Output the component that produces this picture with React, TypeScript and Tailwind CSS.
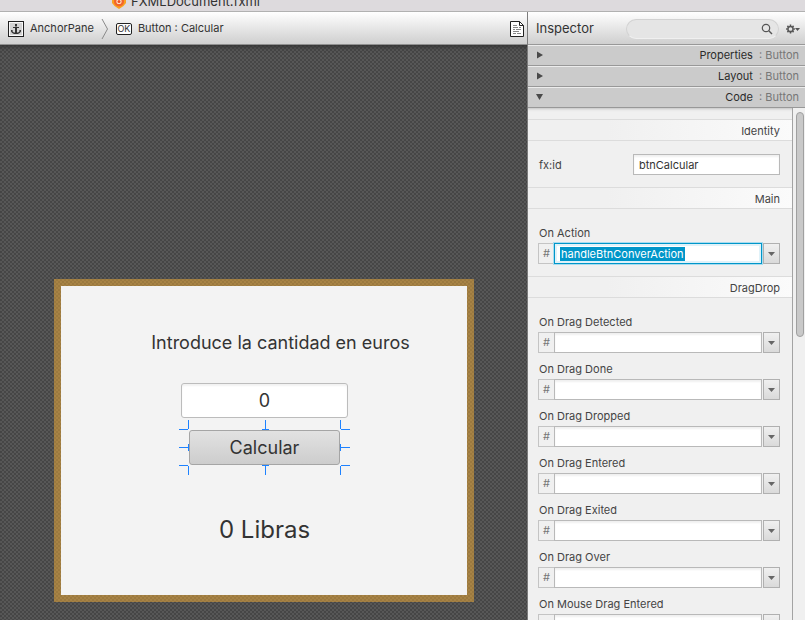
import React from "react";

const dragEvents = [
  "On Drag Detected",
  "On Drag Done",
  "On Drag Dropped",
  "On Drag Entered",
  "On Drag Exited",
  "On Drag Over",
  "On Mouse Drag Entered",
];

function AnchorIcon() {
  return (
    <svg width="16" height="16" viewBox="0 0 16 16" fill="none" aria-hidden="true">
      <rect x="0.5" y="0.5" width="15" height="15" fill="#f8f8f8" stroke="#222" />
      <rect x="2" y="2" width="12" height="12" fill="#d4d4d4" />
      <path d="M7 3H9V5H7ZM7 5.5H9V13H7ZM5 6H11V7H5Z" fill="#333" />
      <path d="M3.5 9.5C4 11.8 6 12.5 8 12.5S12 11.8 12.5 9.5" stroke="#333" strokeWidth="1.2" />
      <path d="M3 11V9H5ZM13 11V9H11Z" fill="#333" />
    </svg>
  );
}

function PageIcon() {
  return (
    <svg width="14" height="16" viewBox="0 0 14 16" fill="none" aria-hidden="true">
      <path d="M0.5 0.5H9.5L13.5 4.5V15.5H0.5Z" fill="#fff" stroke="#222" />
      <path d="M9.5 0.5V4.5H13.5" stroke="#222" />
      <path d="M3 4.5H7M3 6.5H8M9 6.5H11M3 8.5H5M6 8.5H11M3 10.5H9M3 12.5H6M7 12.5H11" stroke="#888" />
    </svg>
  );
}

function FileBadge() {
  return (
    <svg width="16" height="16" viewBox="0 0 16 16" aria-hidden="true">
      <path d="M8 0L15 3V10L12.5 13L8 16L3.5 13L1 10V3Z" fill="#f9a01f" />
      <circle cx="8" cy="8.5" r="5" fill="#f3642a" />
      <circle cx="8" cy="8.5" r="2.6" fill="#fde3c8" />
      <circle cx="8" cy="8.5" r="1.5" fill="#ee4f22" />
    </svg>
  );
}

function GearIcon() {
  return (
    <svg width="14" height="10" viewBox="0 0 14 10" fill="none" aria-hidden="true">
      <circle cx="4.5" cy="5" r="2.6" stroke="#555" strokeWidth="1.5" />
      <path d="M4.5 0.6V2M4.5 8V9.4M0.1 5H1.5M7.5 5H8.9M1.4 1.9L2.4 2.9M6.6 7.1L7.6 8.1M1.4 8.1L2.4 7.1M6.6 2.9L7.6 1.9" stroke="#555" strokeWidth="1.5" />
      <path d="M9 4H14L11.5 7Z" fill="#555" />
    </svg>
  );
}

function Accordion({ title, open }: { title: string; open?: boolean }) {
  return (
    <button
      type="button"
      aria-expanded={!!open}
      className="flex h-[21px] w-full shrink-0 items-center justify-between border-t border-b border-t-[#ececec] border-b-[#989898] bg-[#cbcbcb] pr-[6px] pl-2"
    >
      <svg width="8" height="8" viewBox="0 0 8 8" className="mb-[2px]" aria-hidden="true">
        <path d={open ? "M0 1H7L3.5 7Z" : "M1 0.5L7 4L1 7.5Z"} fill="#4a4a4a" />
      </svg>
      <span className="text-[#777]">
        <span className="text-[#2b2b2b]">{title}</span>&nbsp; : Button
      </span>
    </button>
  );
}

function SectionTitle({ children }: { children: React.ReactNode }) {
  return (
    <h2 className="flex h-[22px] items-center justify-end border-y border-[#dcdcdc] bg-linear-to-r from-[#f0f0f0] from-30% to-[#fbfbfb] pt-[2px] pr-3 text-[#444]">
      {children}
    </h2>
  );
}

function EventField({ label, value, active }: { label: string; value?: string; active?: boolean }) {
  const id = label.replace(/ /g, "-").toLowerCase();
  return (
    <div className="flex flex-col gap-[2px]">
      <label htmlFor={id} className="pl-px leading-4 text-[#444]">
        {label}
      </label>
      <div className="flex h-[21px]">
        <span className="flex w-4 items-center justify-center border border-r-0 border-[#c4c4c4] text-[#777]">#</span>
        {active ? (
          <div className="relative flex min-w-0 flex-1 items-center border border-[#0096c9] bg-white pl-[5px] shadow-[0_0_0_1px_#a9dcef,inset_0_0_0_2px_#e0f2f9]">
            <input
              id={id}
              defaultValue={value}
              className="field-sizing-content h-[14px] bg-[#0096c9] px-px leading-[14px] text-white outline-none"
            />
          </div>
        ) : (
          <input
            id={id}
            className="min-w-0 flex-1 border border-[#b9b9b9] bg-white px-1 shadow-[inset_0_2px_2px_#f0f0f0] outline-none"
          />
        )}
        <button
          type="button"
          aria-label={"Options for " + label}
          className="ml-px flex w-[17px] items-center justify-center border border-[#b0b0b0] bg-linear-to-b from-[#f0f0f0] to-[#dadada]"
        >
          <svg width="7" height="4" viewBox="0 0 7 4" aria-hidden="true">
            <path d="M0 0H7L3.5 4Z" fill="#666" />
          </svg>
        </button>
      </div>
    </div>
  );
}

function SelectionHandles() {
  return (
    <svg
      width="171"
      height="55"
      viewBox="0 0 171 55"
      fill="none"
      className="pointer-events-none absolute -top-[10px] -left-[10px]"
      shapeRendering="crispEdges"
      aria-hidden="true"
    >
      <path
        d="M0 9.5H9M9.5 0V9M162 9.5H171M161.5 0V9M0 45.5H9M9.5 46V55M162 45.5H171M161.5 46V55M86.5 0V9M83 9.5H90M86.5 46V55M83 45.5H90M0 27.5H9M9.5 24V31M162 27.5H171M161.5 24V31"
        stroke="#1e82ff"
      />
    </svg>
  );
}

export default function App() {
  return (
    <div className="flex h-screen flex-col overflow-hidden bg-[#f0f0f0] font-['Inter','Liberation_Sans',sans-serif] text-[11px] text-[#333]">
      <header className="flex h-3 shrink-0 items-end overflow-hidden border-b border-[#b1b1b1] bg-[#dddadd] pl-[111px]">
        <div className="flex h-5 items-center gap-1 text-[13px] leading-5 text-[#333]">
          <FileBadge />
          <span>FXMLDocument.fxml</span>
        </div>
      </header>

      <div className="flex min-h-0 flex-1">
        <main className="flex min-w-0 flex-1 flex-col">
          <nav
            aria-label="Hierarchy"
            className="flex h-[33px] shrink-0 items-center border-b border-[#8f8f8f] bg-linear-to-b from-white to-[#cfcfcf] pt-px pr-[3px] pl-2"
          >
            <AnchorIcon />
            <span className="ml-[6px]">AnchorPane</span>
            <svg width="8" height="22" viewBox="0 0 8 22" fill="none" className="mx-[7px]" aria-hidden="true">
              <path d="M1 1L6.5 11L1 21" stroke="#8a8a8a" />
            </svg>
            <span className="flex h-3 w-4 items-center justify-center rounded-[2px] border border-[#222] bg-white text-[9px] leading-none">
              OK
            </span>
            <span className="ml-[6px] flex-1">Button : Calcular</span>
            <PageIcon />
          </nav>

          <div className="flex flex-1 justify-center overflow-hidden bg-[repeating-conic-gradient(#464646_0_25%,#575757_0_50%)] bg-size-[4px_4px] pt-[234px] pl-px shadow-[inset_0_6px_5px_-4px_#333]">
            <section className="flex h-[323px] w-[420px] shrink-0 bg-[repeating-conic-gradient(#9b793f_0_25%,#a78345_0_50%)] bg-size-[4px_4px] p-[7px]">
              <div className="flex flex-1 flex-col items-center bg-[#f3f3f3] pl-px">
                <label htmlFor="euros" className="mt-[45px] pl-8 text-[18px] leading-6">
                  Introduce la cantidad en euros
                </label>
                <input
                  id="euros"
                  defaultValue="0"
                  className="mt-7 h-[35px] w-[167px] rounded-[3px] border border-[#bcbcbc] bg-white text-center text-[18px] shadow-[inset_0_2px_2px_#f2f2f2] outline-none"
                />
                <div className="relative mt-3">
                  <button
                    type="button"
                    className="block h-[35px] w-[151px] rounded-[3px] border border-[#a5a5a5] bg-linear-to-b from-[#e2e2e2] to-[#cdcdcd] text-[18px] leading-none"
                  >
                    Calcular
                  </button>
                  <SelectionHandles />
                </div>
                <output htmlFor="euros" className="mt-[49px] text-[24px] leading-8">
                  0 Libras
                </output>
              </div>
            </section>
          </div>
        </main>

        <aside className="flex w-[278px] shrink-0 flex-col border-l border-[#7c7c7c]">
          <div className="flex h-[33px] shrink-0 items-center border-b border-[#989898] bg-linear-to-b from-white to-[#cfcfcf] pt-px pr-[5px] pl-2">
            <h1 className="text-[13px]">Inspector</h1>
            <div className="relative ml-auto">
              <input
                type="search"
                aria-label="Search"
                className="block h-5 w-[153px] rounded-full border border-[#d2d2d2] border-b-[#f0f0f0] bg-[#e5e5e5] pr-7 pl-3 outline-none"
              />
              <svg width="12" height="12" viewBox="0 0 12 12" fill="none" className="absolute top-1 right-[6px]" aria-hidden="true">
                <circle cx="5" cy="5" r="3.7" stroke="#555" strokeWidth="1.2" />
                <path d="M7.8 7.8L11 11" stroke="#555" strokeWidth="1.4" />
              </svg>
            </div>
            <button type="button" aria-label="Settings" className="ml-[7px]">
              <GearIcon />
            </button>
          </div>
          <Accordion title="Properties" />
          <Accordion title="Layout" />
          <Accordion title="Code" open />

          <div className="flex min-h-0 flex-1">
            <div className="min-w-0 flex-1 overflow-hidden pt-[11px] shadow-[inset_0_4px_3px_-3px_#c0c0c0]">
              <SectionTitle>Identity</SectionTitle>
              <div className="flex items-center justify-between pt-[13px] pr-3 pb-3 pl-[11px]">
                <label htmlFor="fxid" className="pt-px text-[#444]">
                  fx:id
                </label>
                <input
                  id="fxid"
                  defaultValue="btnCalcular"
                  className="h-[21px] w-[147px] border border-[#b9b9b9] bg-white px-[5px] text-[#333] shadow-[inset_0_2px_2px_#f0f0f0] outline-none"
                />
              </div>
              <SectionTitle>Main</SectionTitle>
              <div className="pt-4 pr-3 pb-3 pl-[10px]">
                <EventField label="On Action" value="handleBtnConverAction" active />
              </div>
              <SectionTitle>DragDrop</SectionTitle>
              <div className="flex flex-col gap-2 pt-4 pr-3 pl-[10px]">
                {dragEvents.map((name) => (
                  <EventField key={name} label={name} />
                ))}
              </div>
            </div>
            <div className="w-[13px] shrink-0 border-l border-[#a3a3a3] pt-1 pl-[3px]">
              <div className="h-[225px] w-2 rounded-full border border-[#a0a0a0] bg-[#c9c9c9]" />
            </div>
          </div>
        </aside>
      </div>
    </div>
  );
}
